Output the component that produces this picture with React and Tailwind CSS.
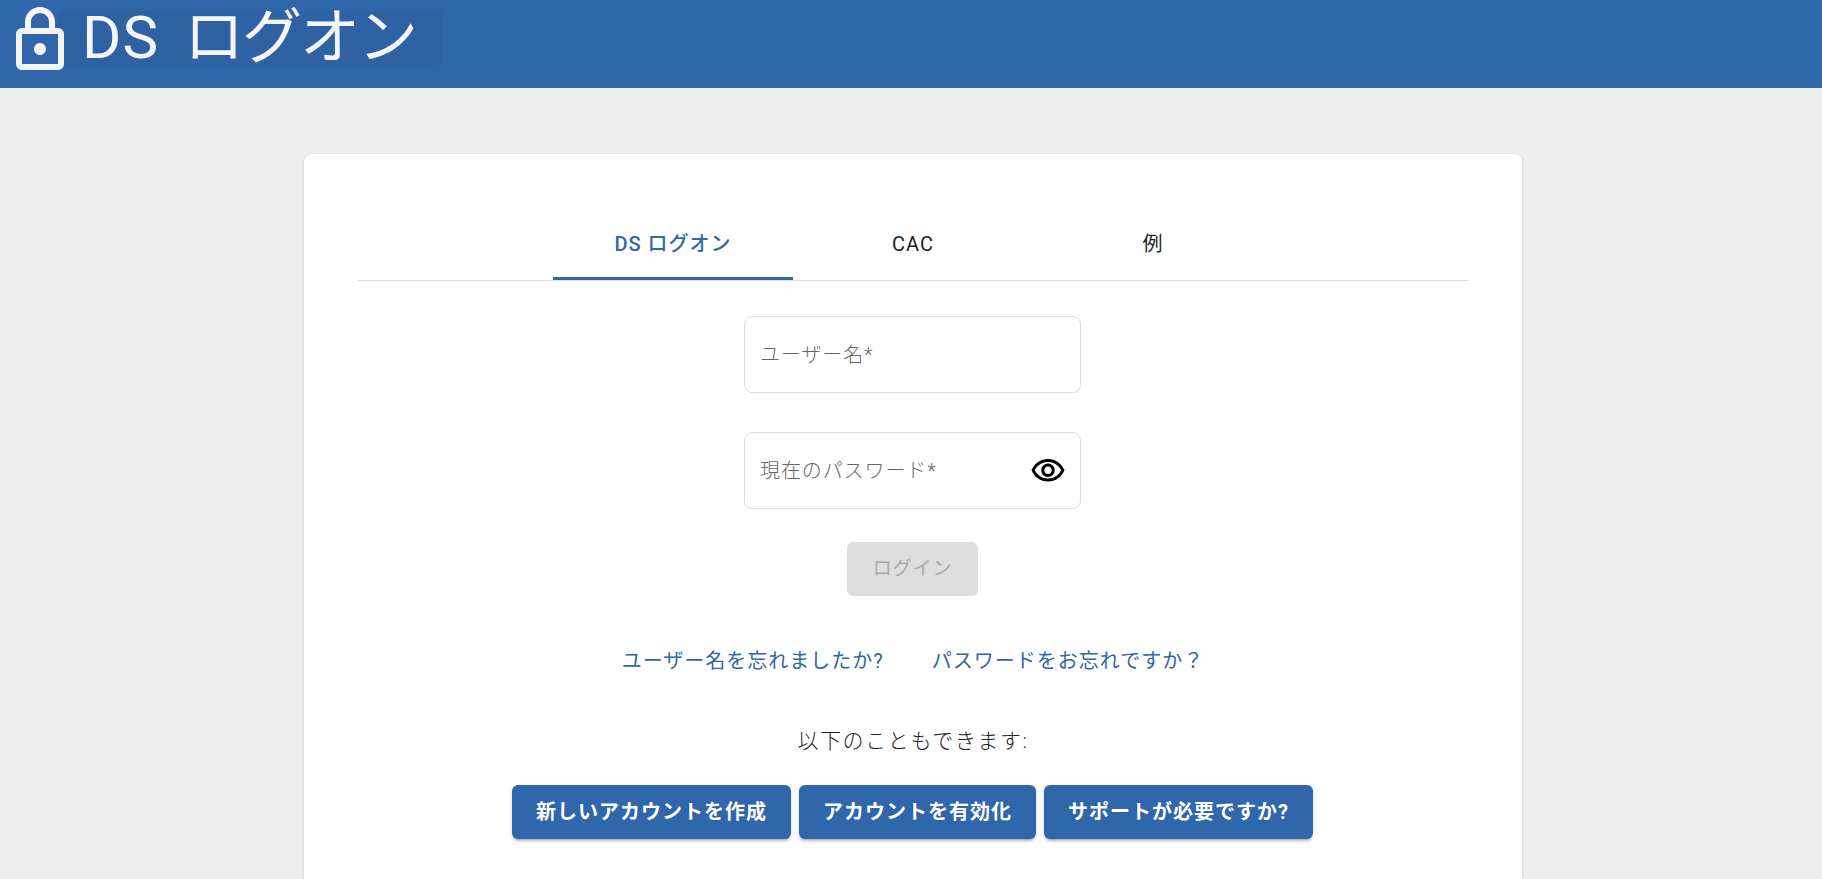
const font = "font-['Roboto','Noto_Sans_CJK_JP',sans-serif]";

function LockIcon() {
  return (
    <svg viewBox="0 0 24 24" className="relative z-10 -mt-[8px] h-[72px] w-[72px] shrink-0 fill-[#f5f5f5]">
      <path d="M18 8h-1V6c0-2.76-2.24-5-5-5S7 3.24 7 6v2H6c-1.1 0-2 .9-2 2v10c0 1.1.9 2 2 2h12c1.1 0 2-.9 2-2V10c0-1.1-.9-2-2-2zM9 6c0-1.66 1.34-3 3-3s3 1.34 3 3v2H9V6zm9 14H6V10h12v10zm-6-3c1.1 0 2-.9 2-2s-.9-2-2-2-2 .9-2 2 .9 2 2 2z" />
    </svg>
  );
}

function EyeIcon() {
  return (
    <svg viewBox="0 0 24 24" className="h-9 w-9 shrink-0 fill-black">
      <path d="M12 6c3.79 0 7.17 2.13 8.82 5.5C19.17 14.87 15.79 17 12 17s-7.17-2.13-8.82-5.5C4.83 8.13 8.21 6 12 6m0-2C7 4 2.73 7.11 1 11.5 2.73 15.89 7 19 12 19s9.27-3.11 11-7.5C21.27 7.11 17 4 12 4zm0 5c1.38 0 2.5 1.12 2.5 2.5S13.38 14 12 14s-2.5-1.12-2.5-2.5S10.62 9 12 9m0-2c-2.48 0-4.5 2.02-4.5 4.5S9.52 16 12 16s4.5-2.02 4.5-4.5S14.48 7 12 7z" />
    </svg>
  );
}

function Tab({ children, active }) {
  return (
    <div
      className={
        active
          ? "flex h-[74px] w-[240px] items-center justify-center border-b-[3px] border-[#3066aa] pt-[4px] text-[20px] font-medium tracking-[1px] text-[#3066aa]"
          : "flex h-[74px] w-[240px] items-center justify-center pt-[2px] text-[20px] tracking-[1px] text-[#222222]"
      }
    >
      {children}
    </div>
  );
}

function Field({ label, icon }) {
  return (
    <div className="flex h-[77px] w-[337px] items-center justify-between rounded-[8px] border border-[#dddddd] pl-[15px] pr-[14px]">
      <span className="text-[20px] font-light tracking-[0.9px] text-[#666666]">{label}</span>
      {icon}
    </div>
  );
}

function ActionButton({ children }) {
  return (
    <button className="flex h-[54px] items-center rounded-[6px] bg-[#3066aa] px-6 text-[20px] font-bold tracking-[1px] text-white shadow-[0_3px_3px_-2px_rgba(0,0,0,0.3),0_2px_4px_rgba(0,0,0,0.14)]">
      {children}
    </button>
  );
}

export default function App() {
  return (
    <div className={`flex h-[879px] flex-col overflow-hidden bg-[#eeeeee] ${font}`}>
      <header className="flex h-[88px] shrink-0 items-center bg-[#3066aa] pl-1">
        <LockIcon />
        <h1 className="-ml-[18px] -mt-[12px] flex h-[54px] w-[385px] items-center whitespace-pre rounded-[6px] bg-[#2f62a2] pl-[24px] text-[60px] font-normal leading-none tracking-[1px] text-[#f5f5f5]">
          DS <span className="ml-[9px] tracking-[-2px]">ログオン</span>
        </h1>
      </header>

      <main className="ml-[304px] mt-[66px] flex w-[1218px] flex-1 flex-col items-center rounded-t-[8px] bg-white px-[54px] pt-[52px] shadow-[0_1px_3px_rgba(0,0,0,0.2)]">
        <nav className="flex w-full justify-center border-b border-[#dddddd]">
          <Tab active>DS ログオン</Tab>
          <Tab>CAC</Tab>
          <Tab>例</Tab>
        </nav>

        <div className="mr-[1px] mt-[35px] flex flex-col gap-[39px]">
          <Field label="ユーザー名*" />
          <Field label="現在のパスワード*" icon={<EyeIcon />} />
        </div>

        <button className="mr-[1px] mt-[33px] flex h-[54px] w-[131px] items-center justify-center rounded-[6px] bg-[#dedede] text-[19px] tracking-[0.9px] text-[#a8a8a8]">
          ログイン
        </button>

        <div className="mt-[49px] flex gap-[48px] text-[20px] font-normal leading-[32px] tracking-[1px] text-[#3066aa]">
          <a>ユーザー名を忘れましたか?</a>
          <a>パスワードをお忘れですか？</a>
        </div>

        <p className="mt-[48px] text-[21px] font-light leading-[32px] tracking-[1.6px] text-[#222222]">
          以下のこともできます:
        </p>

        <div className="mr-[1px] mt-[28px] flex gap-2">
          <ActionButton>新しいアカウントを作成</ActionButton>
          <ActionButton>アカウントを有効化</ActionButton>
          <ActionButton>サポートが必要ですか?</ActionButton>
        </div>
      </main>
    </div>
  );
}
